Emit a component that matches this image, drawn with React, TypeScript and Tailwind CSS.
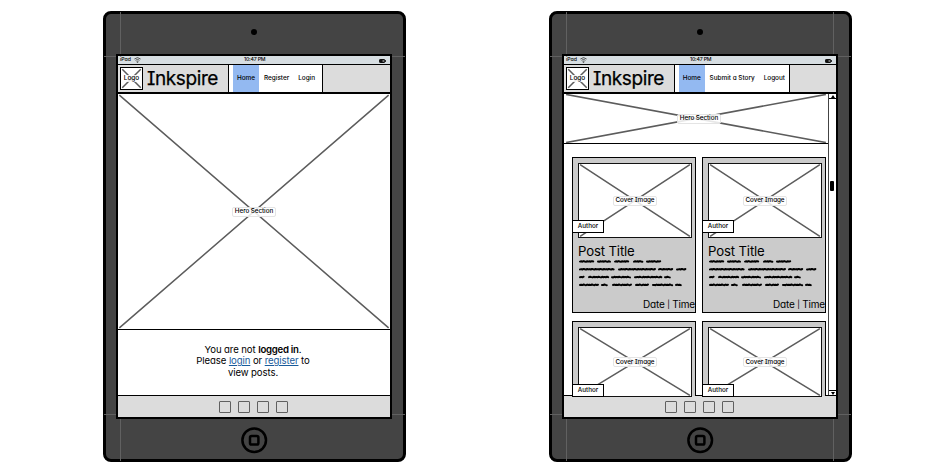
import type { ReactNode } from "react";

function Cross({ inset = 1 }: { inset?: number }) {
  return (
    <svg className="absolute inset-0 h-full w-full" viewBox="0 0 100 100" preserveAspectRatio="none">
      <path
        d={`M${inset} ${inset}L${100 - inset} ${100 - inset}M${inset} ${100 - inset}L${100 - inset} ${inset}`}
        stroke="#5c5c5c"
        strokeWidth="1.5"
        fill="none"
        vectorEffect="non-scaling-stroke"
      />
    </svg>
  );
}

function Tag({ children }: { children: ReactNode }) {
  return (
    <span className="relative flex h-[10px] items-center justify-center whitespace-nowrap rounded-[2px] border border-[#e4e4e4] bg-white/85 px-[1.5px] text-[6.3px] font-medium leading-none tracking-[-0.05px]">
      {children}
    </span>
  );
}

function StatusBar() {
  return (
    <div className="relative flex h-[8px] shrink-0 items-center justify-between bg-[#d7dee2] pl-[2px] pr-[4px] text-[5.2px] font-medium leading-none">
      <span className="flex items-center gap-[3px]">
        iPad
        <svg width="7" height="6" viewBox="0 0 7 6" fill="none" stroke="#222" strokeWidth=".7">
          <path d="M.4 2Q3.5-.8 6.6 2M1.5 3.3Q3.5 1.5 5.5 3.3M2.6 4.5Q3.5 3.7 4.4 4.5" />
          <circle cx="3.5" cy="5.2" r=".3" />
        </svg>
      </span>
      <span className="absolute left-[126px] tracking-[-0.2px]">10:47 PM</span>
      <svg className="mt-[1px]" width="7" height="4" viewBox="0 0 7 4">
        <rect x=".5" y=".5" width="5.2" height="3" rx=".6" fill="#777" stroke="#111" strokeWidth="1" />
        <path d="M1 1h2.5v2H1zM6 1h.8v2H6z" fill="#111" />
      </svg>
    </div>
  );
}

function Header({ items, menuClass }: { items: string[]; menuClass: string }) {
  return (
    <div className="flex h-[30px] shrink-0 border-b-2 border-t border-black bg-[#dcdcdc]">
      <div className="flex w-[110px] shrink-0 items-center pl-[2px]">
        <div className="relative flex h-[23px] w-[23px] items-center justify-center border border-black bg-white">
          <Cross inset={6} />
          <span className="relative bg-white/85 text-[6.5px] font-medium leading-none">Logo</span>
        </div>
        <span className="ml-[4px] text-[19px] leading-none tracking-[-0.4px] [-webkit-text-stroke:0.25px_#000]">
          Inkspire
        </span>
      </div>
      <div className={"flex items-stretch border-x border-black bg-white pl-[4px] text-[6.4px] font-medium leading-none " + menuClass}>
        <span className="flex w-[26px] items-center justify-center bg-[#93b9f1]">{items[0]}</span>
        {items.slice(1).map((item) => (
          <span key={item} className="ml-[5px] mr-[4px] flex items-center whitespace-nowrap">
            {item}
          </span>
        ))}
      </div>
    </div>
  );
}

function Dock() {
  return (
    <div className="flex h-[22px] shrink-0 items-center justify-center gap-[7px] border-t border-black bg-[#dcdcdc] pr-[2px]">
      {[0, 1, 2, 3].map((n) => (
        <span key={n} className="h-[12px] w-[12px] rounded-[1px] border border-[#606060]" />
      ))}
    </div>
  );
}

function Tablet({ children, guide = false }: { children: ReactNode; guide?: boolean }) {
  return (
    <div className="relative flex h-[451px] w-[303px] shrink-0 flex-col rounded-[8px] border-[3px] border-black bg-[#444]">
      <div className="flex h-[40px] shrink-0 items-center justify-center pr-[1px]">
        <span className="mt-[-4px] h-[6px] w-[6px] rounded-full bg-black" />
      </div>
      <span className="absolute left-[14px] top-[-2px] h-[449px] w-px bg-[#616161]" />
      {guide && <span className="absolute left-[281px] top-[-2px] h-[449px] w-px bg-[#616161]" />}
      <span className="absolute left-[-2px] top-[42px] h-px w-[301px] bg-[#606060]" />
      <span className="absolute left-[-2px] top-[400px] h-px w-[301px] bg-[#606060]" />
      <div className="relative ml-[10px] flex h-[365px] w-[276px] shrink-0 flex-col border-2 border-black bg-white">
        {children}
      </div>
      <svg className="ml-[135px] mt-[8px] shrink-0" width="27" height="27" viewBox="0 0 27 27" fill="none" stroke="#000" strokeWidth="2.5">
        <circle cx="13.2" cy="13.3" r="11.8" />
        <rect x="9" y="9.1" width="8.4" height="8.4" rx="1.6" />
      </svg>
    </div>
  );
}

const scribbles = [
  [[0, 15], [18, 32], [35, 50], [54, 64], [67, 82]],
  [[0, 36], [39, 77], [79, 94], [97, 107]],
  [[0, 6], [9, 30], [32, 52], [55, 83], [85, 92]],
  [[0, 20], [22, 29], [33, 53], [56, 70], [73, 94], [96, 103]],
];

const wobble = [-0.1, 0.3, -0.3, 0.1, 0.4, -0.2, 0.2];

function squiggle(a: number, b: number, y: number) {
  let d = `M${a + 1} ${y + 0.2}`;
  for (let x = a + 2.2, i = 0; x < b - 0.4; x += 1.2, i++) d += `L${x.toFixed(1)} ${(y + wobble[(i + a) % 7]).toFixed(1)}`;
  return d;
}

function Scribble() {
  return (
    <svg className="ml-[6px] block shrink-0" width="109" height="29" viewBox="0 0 109 29">
      {scribbles.map((row, r) =>
        row.map(([a, b]) => (
          <path
            key={r + "-" + a}
            d={squiggle(a, b, 2.4 + r * 7.8)}
            fill="none"
            stroke="#000"
            strokeWidth="2"
            strokeLinecap="round"
            strokeLinejoin="round"
          />
        )),
      )}
    </svg>
  );
}

function Cover({ heightClass }: { heightClass: string }) {
  return (
    <div className={"relative ml-[5px] mt-[5px] flex w-[114px] shrink-0 items-center justify-center border border-[#111] bg-white " + heightClass}>
      <Cross />
      <Tag>Cover Image</Tag>
    </div>
  );
}

function Author() {
  return (
    <span className="absolute left-[-1px] top-[62px] flex h-[13px] w-[32px] items-center justify-center border border-black bg-white text-[6.3px] font-medium leading-none">
      Author
    </span>
  );
}

function Post() {
  return (
    <div className="relative flex h-[156px] flex-col border border-black bg-[#cbcbcb]">
      <Cover heightClass="h-[75px]" />
      <Author />
      <h2 className="ml-[5px] mt-[6px] text-[13.2px] leading-[15px] tracking-[-0.15px]">Post Title</h2>
      <Scribble />
      <p className="mt-[9px] text-right text-[10px] leading-[14px] tracking-[-0.2px]">
        Date <span className="relative top-[-0.8px] text-[8px]">|</span> Time
      </p>
    </div>
  );
}

function NextPost() {
  return (
    <div className="relative flex h-[75px] flex-col border border-b-0 border-black bg-[#cbcbcb]">
      <Cover heightClass="h-[70px]" />
      <Author />
    </div>
  );
}

function ScrollBar() {
  return (
    <div className="flex w-[8px] shrink-0 flex-col items-center justify-between border-l border-[#444] bg-white">
      <span className="flex h-[5px] w-full items-center justify-center border-b border-black">
        <svg width="4" height="3" viewBox="0 0 4 3"><path d="M0 3L2 0L4 3z" /></svg>
      </span>
      <span className="mb-[117px] mr-[1px] h-[10px] w-[4px] rounded-[1px] bg-black" />
      <span className="flex h-[5px] w-full items-center justify-center border-t border-black">
        <svg width="4" height="3" viewBox="0 0 4 3"><path d="M0 0L2 3L4 0z" /></svg>
      </span>
    </div>
  );
}

export default function App() {
  return (
    <main className="flex h-[472px] w-[949px] gap-[143px] overflow-hidden bg-white pl-[103px] pt-[11px] font-[Inter,sans-serif] font-normal text-black [font-feature-settings:'cv08','cv11']">
      <Tablet>
        <StatusBar />
        <Header items={["Home", "Register", "Login"]} menuClass="w-[95px]" />
        <div className="relative flex h-[236px] shrink-0 items-center justify-center border-b border-black">
          <Cross inset={0.5} />
          <Tag>Hero Section</Tag>
        </div>
        <div className="flex grow items-center justify-center text-center text-[9.6px] leading-[11.6px] tracking-[-0.1px]">
          <p className="mr-[2px] mt-[-3px]">
            You are not <b className="font-semibold tracking-[-0.25px]">logged in</b>.<br />
            Please <a className="text-[#195b9b] underline">login</a> or{" "}
            <a className="text-[#195b9b] underline">register</a> to
            <br />
            view posts.
          </p>
        </div>
        <Dock />
      </Tablet>
      <Tablet guide>
        <StatusBar />
        <Header items={["Home", "Submit a Story", "Logout"]} menuClass="w-[116px]" />
        <div className="flex min-h-0 grow">
          <div className="flex min-w-0 grow flex-col">
            <div className="relative flex h-[50px] shrink-0 items-center justify-center border-b border-black pl-[6px]">
              <Cross inset={0.8} />
              <Tag>Hero Section</Tag>
            </div>
            <div className="grid grid-cols-[124px_124px] gap-x-[6px] gap-y-[8px] pl-[8px] pt-[13px]">
              <Post />
              <Post />
              <NextPost />
              <NextPost />
            </div>
          </div>
          <ScrollBar />
        </div>
        <Dock />
      </Tablet>
    </main>
  );
}
